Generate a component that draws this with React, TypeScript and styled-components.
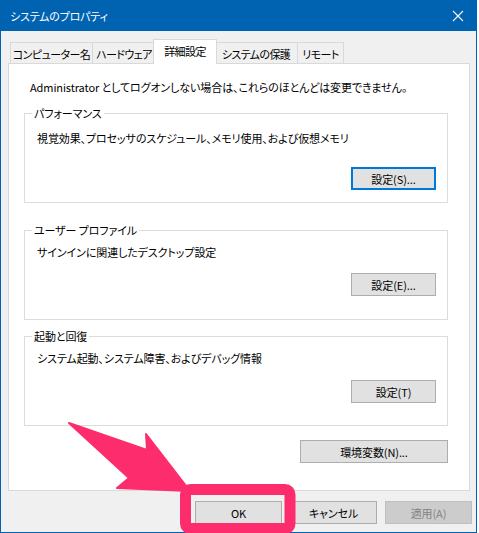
import React from 'react'
import styled, { createGlobalStyle, css } from 'styled-components'

const GlobalStyle = createGlobalStyle`
  html, body {
    margin: 0;
    padding: 0;
    background: #ffffff;
  }
  body {
    font-family: "Noto Sans CJK JP", "Liberation Sans", sans-serif;
    font-size: 11px;
    letter-spacing: -0.1px;
    font-feature-settings: "palt";
    color: #000;
  }
`

const Window = styled.div`
  position: relative;
  box-sizing: border-box;
  width: 477px;
  height: 533px;
  background: #f0f0f0;
  border: 1px solid #0063b1;
  border-top: none;
`

const TitleBar = styled.div`
  display: flex;
  align-items: center;
  justify-content: space-between;
  height: 31px;
  margin: 0 -1px;
  padding: 0 10px 0 10px;
  background: #0063b1;
  color: #fff;
  font-size: 11px;
  letter-spacing: -0.2px;
`

const CloseIcon = styled.svg`
  width: 12px;
  height: 12px;
  margin-right: 3px;
`

const Body = styled.div`
  padding: 8px 6px 0 7px;
`

const TabStrip = styled.div`
  display: flex;
  align-items: flex-end;
  height: 24px;
  padding-left: 2px;
  position: relative;
  z-index: 1;
`

const Tab = styled.div<{ $w: number; $active?: boolean }>`
  box-sizing: border-box;
  display: flex;
  align-items: center;
  justify-content: center;
  width: ${(p) => p.$w}px;
  height: 21px;
  margin-left: -1px;
  border: 1px solid #d9d9d9;
  border-bottom: none;
  background: #f0f0f0;
  white-space: nowrap;
  padding-top: 1px;
  letter-spacing: -0.6px;
  &:first-child {
    margin-left: 0;
  }
  ${(p) =>
    p.$active &&
    css`
      width: ${p.$w + 4}px;
      height: 25px;
      margin: 0 -2px -1px -3px;
      background: #fff;
      position: relative;
      z-index: 2;
      padding-top: 0;
      padding-bottom: 2px;
    `}
`

const Panel = styled.div`
  box-sizing: border-box;
  display: flex;
  flex-direction: column;
  width: 462px;
  height: 428px;
  border: 1px solid #d9d9d9;
  background: #fff;
  padding: 15px 21px 0 15px;
`

const Intro = styled.div`
  line-height: 16px;
  margin-left: 6px;
  white-space: nowrap;
`

const Group = styled.fieldset<{ $mt: number; $pt: number }>`
  box-sizing: border-box;
  display: flex;
  flex-direction: column;
  height: 98px;
  margin: ${(p) => p.$mt}px 0 0 0;
  padding: ${(p) => p.$pt}px 11px 0 12px;
  border: 1px solid #dcdcdc;
  min-width: 0;
`

const Legend = styled.legend`
  line-height: 16px;
  padding: 0 2px;
  margin-left: -5px;
`

const Desc = styled.div`
  line-height: 16px;
  white-space: nowrap;
`

const ButtonRow = styled.div<{ $mt: number }>`
  display: flex;
  justify-content: flex-end;
  gap: 8px;
  margin-top: ${(p) => p.$mt}px;
`

const Button = styled.button<{ $w: number; $focus?: boolean }>`
  box-sizing: border-box;
  width: ${(p) => p.$w}px;
  height: 23px;
  padding: 0;
  font: inherit;
  letter-spacing: inherit;
  font-feature-settings: "palt";
  color: #000;
  background: #e1e1e1;
  border: 1px solid #adadad;
  line-height: 20px;
  ${(p) =>
    p.$focus &&
    css`
      border: 2px solid #0078d7;
    `}
  &:disabled {
    background: #cccccc;
    border-color: #bfbfbf;
    color: #838383;
  }
`

const Footer = styled.div`
  display: flex;
  justify-content: flex-end;
  gap: 8px;
  padding-top: 10px;
  margin-right: -2px;
`

const Annotation = styled.svg`
  position: absolute;
  left: 0;
  top: 0;
  width: 477px;
  height: 533px;
  pointer-events: none;
  overflow: visible;
  z-index: 5;
`

const tabs = [
  { label: 'コンピューター名', w: 83 },
  { label: 'ハードウェア', w: 64 },
  { label: '詳細設定', w: 60, active: true },
  { label: 'システムの保護', w: 84 },
  { label: 'リモート', w: 47 },
]

export default function App() {
  return (
    <>
      <GlobalStyle />
      <Window>
        <TitleBar>
          <span>システムのプロパティ</span>
          <CloseIcon viewBox="0 0 12 12">
            <path d="M1 1 L11 11 M11 1 L1 11" stroke="#fff" strokeWidth="1.1" />
          </CloseIcon>
        </TitleBar>
        <Body>
          <TabStrip>
            {tabs.map((t) => (
              <Tab key={t.label} $w={t.w} $active={t.active}>
                {t.label}
              </Tab>
            ))}
          </TabStrip>
          <Panel>
            <Intro>Administrator としてログオンしない場合は、これらのほとんどは変更できません。</Intro>

            <Group $mt={10} $pt={9}>
              <Legend>パフォーマンス</Legend>
              <Desc>視覚効果、プロセッサのスケジュール、メモリ使用、および仮想メモリ</Desc>
              <ButtonRow $mt={21}>
                <Button $w={85} $focus>設定(S)...</Button>
              </ButtonRow>
            </Group>

            <Group $mt={19} $pt={6}>
              <Legend>ユーザー プロファイル</Legend>
              <Desc>サインインに関連したデスクトップ設定</Desc>
              <ButtonRow $mt={13}>
                <Button $w={85}>設定(E)...</Button>
              </ButtonRow>
            </Group>

            <Group $mt={8} $pt={6}>
              <Legend>起動と回復</Legend>
              <Desc>システム起動、システム障害、およびデバッグ情報</Desc>
              <ButtonRow $mt={14}>
                <Button $w={85}>設定(T)</Button>
              </ButtonRow>
            </Group>

            <ButtonRow $mt={14}>
              <Button $w={148}>環境変数(N)...</Button>
            </ButtonRow>
          </Panel>
          <Footer>
            <Button $w={87}>OK</Button>
            <Button $w={87}>キャンセル</Button>
            <Button $w={87} disabled>
              適用(A)
            </Button>
          </Footer>
        </Body>
        <Annotation viewBox="0 0 477 533">
          <polygon
            points="68,423 146,450 145,434 189,491 116,488 128,478"
            fill="#fd2d6d"
            strokeLinejoin="round"
            stroke="#fd2d6d"
            strokeWidth="2"
          />
          <rect x="184.5" y="489.5" width="104.5" height="39" rx="5" fill="none" stroke="#fd2d6d" strokeWidth="11" />
        </Annotation>
      </Window>
    </>
  )
}
